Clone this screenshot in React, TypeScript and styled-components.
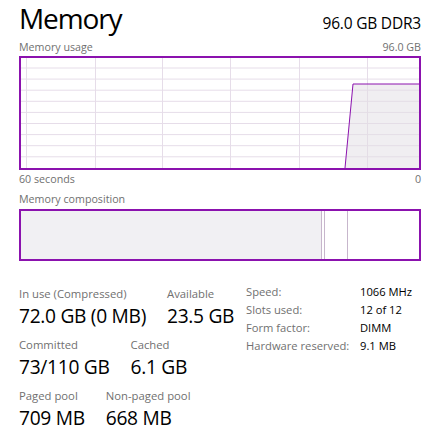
import React from "react";
import styled, { createGlobalStyle } from "styled-components";

const GlobalStyle = createGlobalStyle`
  body {
    margin: 0;
    background: #ffffff;
    font-family: "Open Sans", "Noto Sans", "Liberation Sans", sans-serif;
    color: #000000;
  }
`;

const PURPLE = "#8b12ae";

// Page wrapper
const Page = styled.div`
  width: 439px;
  height: 441px;
  box-sizing: border-box;
  padding: 0 18px 0 19px;
  overflow: hidden;
`;

// Title row: "Memory" and the installed memory
const Header = styled.div`
  display: flex;
  justify-content: space-between;
  align-items: baseline;
  height: 38px;
`;

const Title = styled.h1`
  margin: 0;
  font-weight: 400;
  font-size: 28px;
  line-height: 36px;
  letter-spacing: -1.1px;
`;

const Total = styled.span`
  font-size: 15.5px;
  letter-spacing: -0.2px;
`;

// Small grey caption row above/below the charts
const CaptionRow = styled.div<{ $height?: number }>`
  display: flex;
  justify-content: space-between;
  align-items: center;
  height: ${(p) => p.$height ?? 18}px;
  font-size: 10.7px;
  color: #707070;
`;

const Frame = styled.div<{ $height: number }>`
  box-sizing: border-box;
  height: ${(p) => p.$height}px;
  border: 2px solid ${PURPLE};
`;

const ChartSvg = styled.svg`
  display: block;
  width: 100%;
  height: 100%;
`;

// Memory composition bar
const CompBar = styled.div`
  display: flex;
  height: 100%;
`;

const CompSegment = styled.div<{ $width: number; $fill?: boolean; $edge?: boolean }>`
  width: ${(p) => p.$width}px;
  height: 100%;
  background: ${(p) => (p.$fill ? "#f1f0f3" : "transparent")};
  border-right: ${(p) => (p.$edge ? "1px solid #c7b6cc" : "none")};
  flex-shrink: 0;
`;

// Stats area
const Stats = styled.div`
  display: flex;
  margin-top: 25px;
`;

const LeftStats = styled.div`
  width: 227px;
  display: flex;
  flex-direction: column;
  gap: 7px;
`;

const StatRow = styled.div`
  display: flex;
  gap: 21px;
`;

const Stat = styled.div`
  display: flex;
  flex-direction: column;
`;

const StatLabel = styled.span`
  font-size: 11.3px;
  line-height: 15px;
  color: #707070;
`;

const StatValue = styled.span`
  font-size: 19.2px;
  line-height: 29px;
  letter-spacing: -0.3px;
`;

const InfoTable = styled.div`
  display: grid;
  grid-template-columns: 114px auto;
  grid-auto-rows: 17.9px;
  align-items: center;
  font-size: 11.2px;
  margin-top: -3px;
`;

const InfoLabel = styled.span`
  color: #707070;
`;

const InfoValue = styled.span`
  color: #000000;
`;

const UsageChart: React.FC = () => {
  const w = 398;
  const h = 110;
  const vLines = [5, 74, 141, 209, 278, 346];
  const hLines = Array.from({ length: 9 }, (_, i) => 10 + i * 11.1);
  return (
    <ChartSvg viewBox={`0 0 ${w} ${h}`} preserveAspectRatio="none">
      {hLines.map((y) => (
        <line key={y} x1={0} x2={w} y1={y} y2={y} stroke="#e6dde9" strokeWidth={1} />
      ))}
      {vLines.map((x) => (
        <line key={x} x1={x + 0.5} x2={x + 0.5} y1={0} y2={h} stroke="#e6dde9" strokeWidth={1} />
      ))}
      <polygon points={`324,${h} 332,26 ${w},26 ${w},${h}`} fill="rgba(225,222,228,0.5)" />
      <polyline points={`324,${h} 332,26 ${w},26`} fill="none" stroke={PURPLE} strokeWidth={1} />
    </ChartSvg>
  );
};

const App: React.FC = () => {
  return (
    <>
      <GlobalStyle />
      <Page>
        <Header>
          <Title>Memory</Title>
          <Total>96.0 GB DDR3</Total>
        </Header>
        <CaptionRow $height={18}>
          <span>Memory usage</span>
          <span>96.0 GB</span>
        </CaptionRow>
        <Frame $height={114}>
          <UsageChart />
        </Frame>
        <CaptionRow $height={18}>
          <span>60 seconds</span>
          <span>0</span>
        </CaptionRow>
        <CaptionRow $height={21}>
          <span>Memory composition</span>
        </CaptionRow>
        <Frame $height={52}>
          <CompBar>
            <CompSegment $width={300} $fill $edge />
            <CompSegment $width={2} $edge />
            <CompSegment $width={22} $edge />
          </CompBar>
        </Frame>
        <Stats>
          <LeftStats>
            <StatRow>
              <Stat>
                <StatLabel>In use (Compressed)</StatLabel>
                <StatValue>72.0 GB (0 MB)</StatValue>
              </Stat>
              <Stat>
                <StatLabel>Available</StatLabel>
                <StatValue>23.5 GB</StatValue>
              </Stat>
            </StatRow>
            <StatRow>
              <Stat>
                <StatLabel>Committed</StatLabel>
                <StatValue>73/110 GB</StatValue>
              </Stat>
              <Stat>
                <StatLabel>Cached</StatLabel>
                <StatValue>6.1 GB</StatValue>
              </Stat>
            </StatRow>
            <StatRow>
              <Stat>
                <StatLabel>Paged pool</StatLabel>
                <StatValue>709 MB</StatValue>
              </Stat>
              <Stat>
                <StatLabel>Non-paged pool</StatLabel>
                <StatValue>668 MB</StatValue>
              </Stat>
            </StatRow>
          </LeftStats>
          <InfoTable>
            <InfoLabel>Speed:</InfoLabel>
            <InfoValue>1066 MHz</InfoValue>
            <InfoLabel>Slots used:</InfoLabel>
            <InfoValue>12 of 12</InfoValue>
            <InfoLabel>Form factor:</InfoLabel>
            <InfoValue>DIMM</InfoValue>
            <InfoLabel>Hardware reserved:</InfoLabel>
            <InfoValue>9.1 MB</InfoValue>
          </InfoTable>
        </Stats>
      </Page>
    </>
  );
};

export default App;
